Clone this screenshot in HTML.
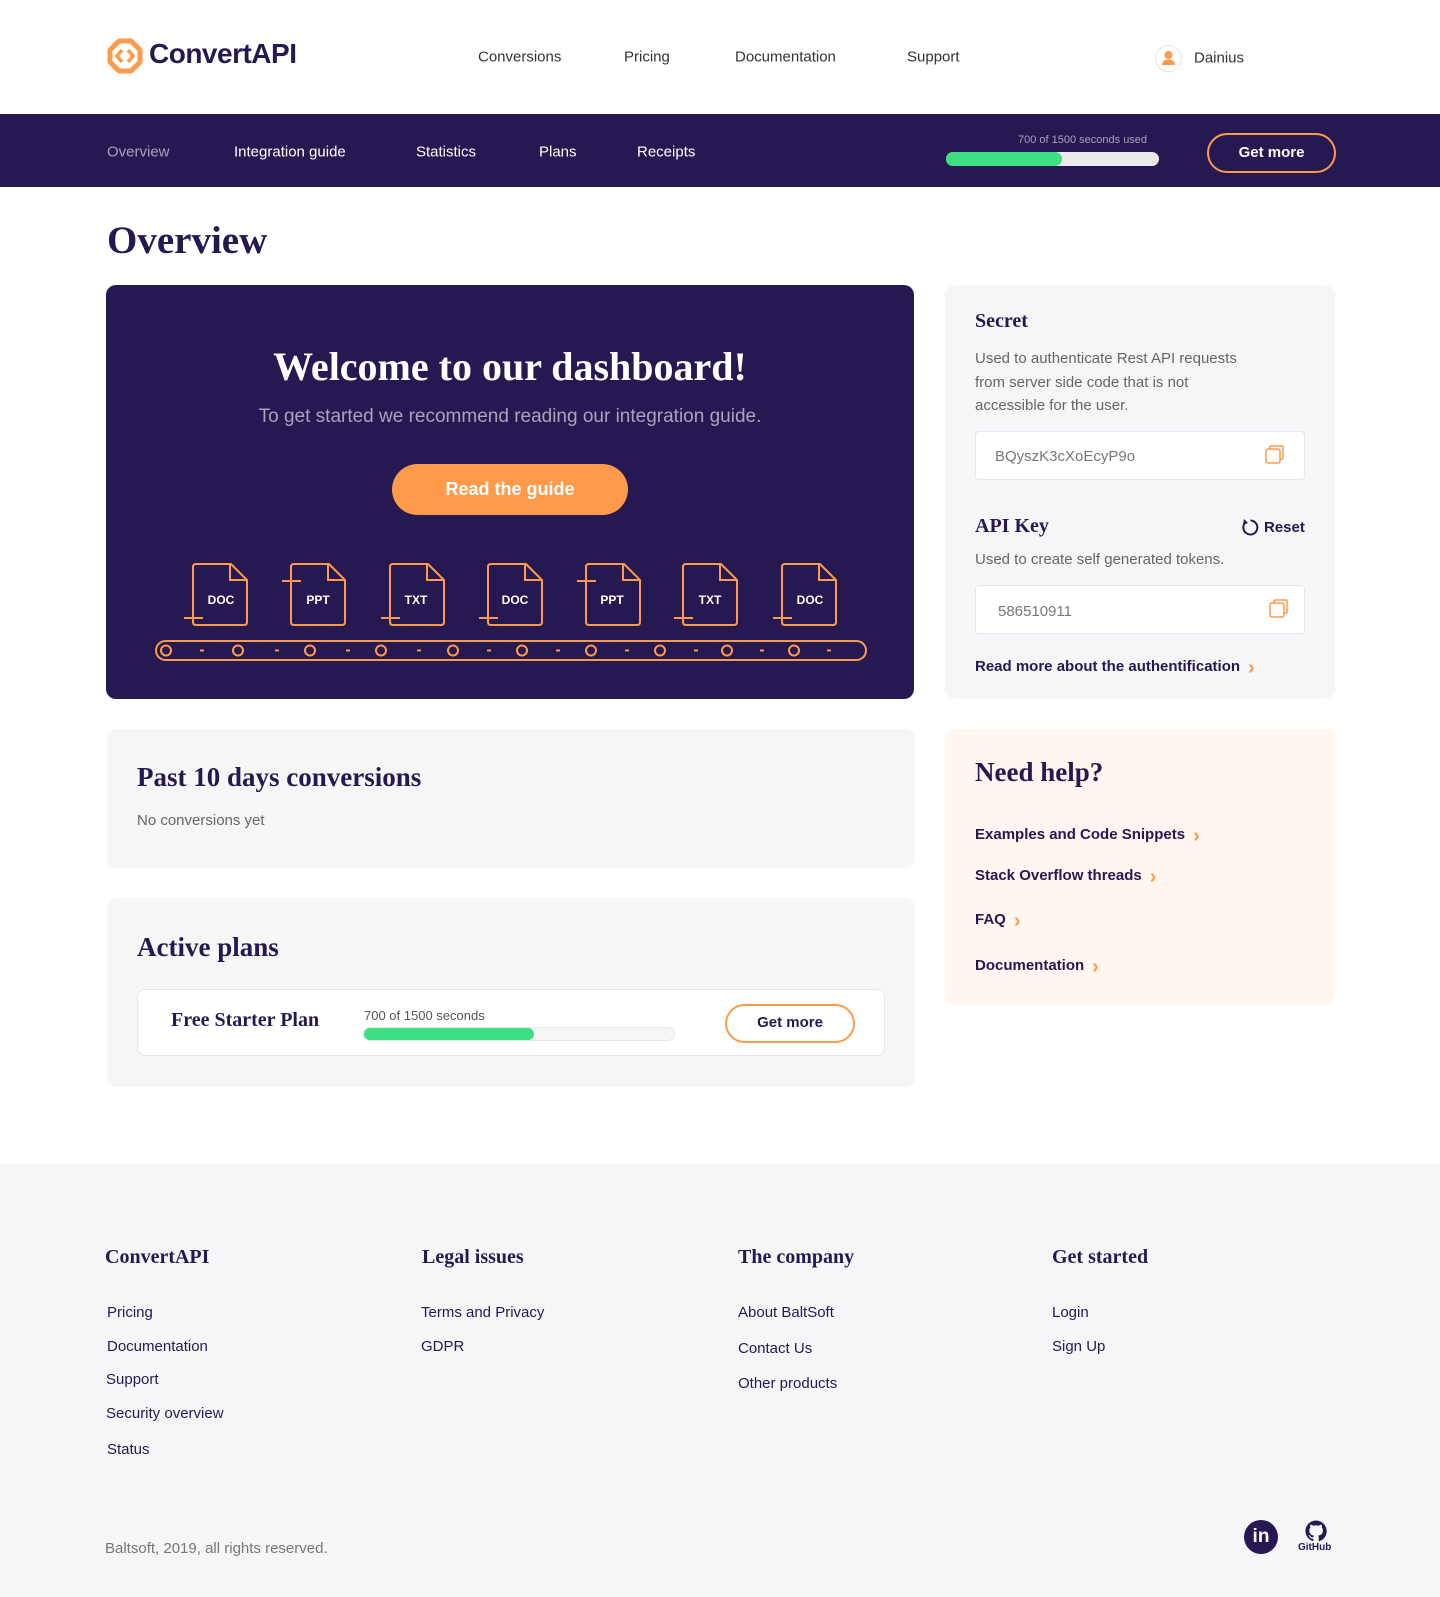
<!DOCTYPE html>
<html><head><meta charset="utf-8"><style>
*{margin:0;padding:0;box-sizing:border-box}
body{width:1440px;height:1597px;position:relative;background:#fff;font-family:"Liberation Sans",sans-serif;color:#261850;overflow:hidden}
.a{position:absolute;white-space:nowrap}
.serif{font-family:"Liberation Serif",serif;font-weight:bold;color:#261850}
.navt{font-size:15px;color:#333;transform:translateY(-50%)}
.sub{font-size:15px;color:#fff;transform:translateY(-50%)}
.card{position:absolute;border-radius:10px}
.g{color:#666;font-size:15px}
.lnk,.rst{font-size:15px;font-weight:bold;color:#261850}
.lnk:after{content:"›";color:#ff9a4b;font-size:20px;margin-left:8px;position:relative;top:3px}
.fl{font-size:15px;color:#261850}
</style></head><body>
<!-- header -->
<svg class="a" style="left:106px;top:37px" width="38" height="38" viewBox="0 0 38 38"><path d="M13 4 L25 4 L34 13 L34 25 L25 34 L13 34 L4 25 L4 13 Z" fill="none" stroke="#ff9a4b" stroke-width="5" stroke-linejoin="round"/><path d="M16 13 L11 19 L16 25 M22 13 L27 19 L22 25" fill="none" stroke="#ff9a4b" stroke-width="3.5"/></svg>
<div class="a" style="left:149px;top:38px;font-size:28px;font-weight:bold;color:#261850;letter-spacing:-0.5px">ConvertAPI</div>
<div class="a navt" style="left:478px;top:57px">Conversions</div>
<div class="a navt" style="left:624px;top:57px">Pricing</div>
<div class="a navt" style="left:735px;top:57px">Documentation</div>
<div class="a navt" style="left:907px;top:57px">Support</div>
<div class="a" style="left:1155px;top:45px;width:27px;height:27px;border-radius:50%;border:1px solid #e4e2ef;background:#fff"><svg width="25" height="25" viewBox="0 0 25 25"><circle cx="12.5" cy="9" r="4" fill="#ff9a4b"/><path d="M6 19 Q6 13.5 12.5 13.5 Q19 13.5 19 19 Z" fill="#ff9a4b"/></svg></div>
<div class="a navt" style="left:1194px;top:58px">Dainius</div>
<!-- subnav -->
<div class="a" style="left:0;top:114px;width:1440px;height:73px;background:#261850"></div>
<div class="a sub" style="left:107px;top:152px;color:#a9a3c0">Overview</div>
<div class="a sub" style="left:234px;top:152px">Integration guide</div>
<div class="a sub" style="left:416px;top:152px">Statistics</div>
<div class="a sub" style="left:539px;top:152px">Plans</div>
<div class="a sub" style="left:637px;top:152px">Receipts</div>
<div class="a" style="left:1018px;top:134px;font-size:11px;color:#a9a3c0">700 of 1500 seconds used</div>
<div class="a" style="left:946px;top:152px;width:213px;height:14px;border-radius:7px;background:#ebebeb"><div style="width:116px;height:14px;border-radius:7px;background:#3ddf82"></div></div>
<div class="a" style="left:1207px;top:133px;width:129px;height:40px;border:2px solid #ff9a4b;border-radius:20px;color:#fff;font-weight:bold;font-size:15px;text-align:center;line-height:35px">Get more</div>
<div class="a serif" style="left:107px;top:218px;font-size:39px">Overview</div>
<!-- welcome -->
<div class="card" style="left:106px;top:285px;width:808px;height:414px;background:#261850"></div>
<div class="a serif" style="left:106px;width:808px;text-align:center;top:343px;font-size:40px;color:#fff">Welcome to our dashboard!</div>
<div class="a" style="left:106px;width:808px;text-align:center;top:406px;font-size:19px;color:#a9a3c0">To get started we recommend reading our integration guide.</div>
<div class="a" style="left:392px;top:464px;width:236px;height:51px;border-radius:26px;background:#ff9a4b;color:#fff;font-weight:bold;font-size:18px;text-align:center;line-height:51px">Read the guide</div>
<svg class="a" style="left:150px;top:560px" width="720" height="104">
<defs><path id="d" d="M38 4 L3 4 Q0 4 0 7 L0 62 Q0 65 3 65 L51 65 Q54 65 54 62 L54 20 L38 4 Z M37 4 L37 20 L54 20"/></defs>
<g fill="none" stroke="#ff9a4b" stroke-width="2">
<use href="#d" x="43"/><use href="#d" x="141"/><use href="#d" x="240"/><use href="#d" x="338"/><use href="#d" x="436"/><use href="#d" x="533"/><use href="#d" x="632"/>
<path d="M34 58 H53 M132 21 H151 M231 58 H250 M329 58 H348 M427 21 H446 M524 58 H543 M623 58 H642"/>
<rect x="6" y="81" width="710" height="19" rx="9.5"/>
<circle cx="16" cy="90.5" r="5"/><circle cx="88" cy="90.5" r="5"/><circle cx="160" cy="90.5" r="5"/><circle cx="231" cy="90.5" r="5"/><circle cx="303" cy="90.5" r="5"/><circle cx="372" cy="90.5" r="5"/><circle cx="441" cy="90.5" r="5"/><circle cx="510" cy="90.5" r="5"/><circle cx="577" cy="90.5" r="5"/><circle cx="644" cy="90.5" r="5"/>
<path d="M50 90.5h4M125 90.5h4M196 90.5h4M267 90.5h4M337 90.5h4M406 90.5h4M475 90.5h4M544 90.5h4M610 90.5h4M677 90.5h4"/>
</g>
<g fill="#fff" font-family="Liberation Sans" font-weight="bold" font-size="12" text-anchor="middle">
<text x="71" y="44">DOC</text><text x="168" y="44">PPT</text><text x="266" y="44">TXT</text><text x="365" y="44">DOC</text><text x="462" y="44">PPT</text><text x="560" y="44">TXT</text><text x="660" y="44">DOC</text></g>
</svg>
<!-- secret card -->
<div class="card" style="left:945px;top:285px;width:390px;height:414px;background:#f6f6f9"></div>
<div class="a serif" style="left:975px;top:310px;font-size:20px">Secret</div>
<div class="a g" style="left:975px;top:347px;line-height:23.5px">Used to authenticate Rest API requests<br>from server side code that is not<br>accessible for the user.</div>
<div class="a" style="left:975px;top:431px;width:330px;height:49px;background:#fff;border:1px solid #e6e6ec;border-radius:4px"></div>
<div class="a g" style="left:995px;top:448px;color:#777">BQyszK3cXoEcyP9o</div>
<svg class="a" style="left:1264px;top:444px" width="22" height="22"><g fill="none" stroke="#ff9a4b" stroke-width="1.5"><rect x="2" y="5" width="14" height="14" rx="2"/><path d="M6 5 V3 Q6 2 7 2 H18 Q19 2 19 3 V14 Q19 15 18 15 H16"/></g></svg>
<div class="a serif" style="left:975px;top:515px;font-size:20px">API Key</div>
<svg class="a" style="left:1241px;top:518px" width="19" height="19"><path d="M5 4 A7 7 0 1 0 9.5 2.5" fill="none" stroke="#261850" stroke-width="2"/><path d="M3 1 L7 5 L2 7 Z" fill="#261850"/></svg>
<div class="a rst" style="left:1264px;top:519px">Reset</div>
<div class="a g" style="left:975px;top:551px">Used to create self generated tokens.</div>
<div class="a" style="left:975px;top:585px;width:330px;height:49px;background:#fff;border:1px solid #e6e6ec;border-radius:4px"></div>
<div class="a g" style="left:998px;top:603px;color:#777">586510911</div>
<svg class="a" style="left:1268px;top:598px" width="22" height="22"><g fill="none" stroke="#ff9a4b" stroke-width="1.5"><rect x="2" y="5" width="14" height="14" rx="2"/><path d="M6 5 V3 Q6 2 7 2 H18 Q19 2 19 3 V14 Q19 15 18 15 H16"/></g></svg>
<div class="a lnk" style="left:975px;top:654px">Read more about the authentification</div>
<!-- past -->
<div class="card" style="left:107px;top:729px;width:808px;height:139px;background:#f6f6f6"></div>
<div class="a serif" style="left:137px;top:762px;font-size:27px">Past 10 days conversions</div>
<div class="a g" style="left:137px;top:812px">No conversions yet</div>
<!-- active -->
<div class="card" style="left:107px;top:898px;width:808px;height:189px;background:#f6f6f6"></div>
<div class="a serif" style="left:137px;top:932px;font-size:27px">Active plans</div>
<div class="a" style="left:137px;top:989px;width:748px;height:67px;background:#fff;border:1px solid #e6e6ec;border-radius:8px"></div>
<div class="a serif" style="left:171px;top:1009px;font-size:20px">Free Starter Plan</div>
<div class="a" style="left:364px;top:1008px;font-size:13px;color:#555">700 of 1500 seconds</div>
<div class="a" style="left:363px;top:1027px;width:312px;height:14px;border-radius:7px;background:#f6f6f9;border:1px solid #e6e6ec"><div style="width:170px;height:12px;border-radius:6px;background:#3ddf82"></div></div>
<div class="a" style="left:725px;top:1004px;width:130px;height:39px;border:2px solid #ff9a4b;border-radius:20px;font-weight:bold;font-size:15px;text-align:center;line-height:34px">Get more</div>
<!-- help -->
<div class="card" style="left:945px;top:729px;width:390px;height:276px;background:#fff6ef"></div>
<div class="a serif" style="left:975px;top:757px;font-size:27px">Need help?</div>
<div class="a lnk" style="left:975px;top:822px">Examples and Code Snippets</div>
<div class="a lnk" style="left:975px;top:863px">Stack Overflow threads</div>
<div class="a lnk" style="left:975px;top:907px">FAQ</div>
<div class="a lnk" style="left:975px;top:953px">Documentation</div>
<!-- footer -->
<div class="a" style="left:0;top:1164px;width:1440px;height:433px;background:#f6f6f9"></div>
<div class="a serif" style="left:105px;top:1246px;font-size:20px">ConvertAPI</div>
<div class="a serif" style="left:422px;top:1246px;font-size:20px">Legal issues</div>
<div class="a serif" style="left:738px;top:1246px;font-size:20px">The company</div>
<div class="a serif" style="left:1052px;top:1246px;font-size:20px">Get started</div>
<div class="a fl" style="left:107px;top:1304px">Pricing</div>
<div class="a fl" style="left:107px;top:1338px">Documentation</div>
<div class="a fl" style="left:106px;top:1371px">Support</div>
<div class="a fl" style="left:106px;top:1405px">Security overview</div>
<div class="a fl" style="left:107px;top:1441px">Status</div>
<div class="a fl" style="left:421px;top:1304px">Terms and Privacy</div>
<div class="a fl" style="left:421px;top:1338px">GDPR</div>
<div class="a fl" style="left:738px;top:1304px">About BaltSoft</div>
<div class="a fl" style="left:738px;top:1340px">Contact Us</div>
<div class="a fl" style="left:738px;top:1375px">Other products</div>
<div class="a fl" style="left:1052px;top:1304px">Login</div>
<div class="a fl" style="left:1052px;top:1338px">Sign Up</div>
<div class="a" style="left:105px;top:1540px;font-size:15px;color:#777">Baltsoft, 2019, all rights reserved.</div>
<div class="a" style="left:1244px;top:1520px;width:34px;height:34px;border-radius:50%;background:#261850;color:#fff;font-weight:bold;font-size:19px;text-align:center;line-height:33px">in</div>
<svg class="a" style="left:1304px;top:1520px" width="24" height="22" viewBox="0 0 24 24"><path fill="#261850" d="M12 .5C5.7.5.5 5.7.5 12c0 5.1 3.3 9.4 7.9 10.9.6.1.8-.3.8-.6v-2c-3.2.7-3.900-1.5-3.9-1.5-.5-1.3-1.3-1.700-1.3-1.7-1-.7.1-.7.1-.7 1.2.1 1.8 1.2 1.8 1.2 1 1.8 2.7 1.3 3.4 1 .1-.8.4-1.3.7-1.6-2.6-.3-5.3-1.3-5.3-5.7 0-1.3.5-2.3 1.2-3.1-.1-.3-.5-1.5.1-3.1 0 0 1-.3 3.2 1.2a11 11 0 0 1 5.8 0c2.2-1.5 3.2-1.2 3.2-1.2.6 1.6.2 2.8.1 3.1.7.8 1.2 1.8 1.2 3.1 0 4.4-2.7 5.4-5.3 5.7.4.4.8 1.1.8 2.2v3.3c0 .3.2.7.8.6 4.6-1.5 7.900-5.8 7.9-10.9C23.5 5.7 18.3.5 12 .5z"/></svg>
<div class="a" style="left:1298px;top:1542px;font-size:10px;font-weight:bold;color:#261850">GitHub</div>
</body></html>
